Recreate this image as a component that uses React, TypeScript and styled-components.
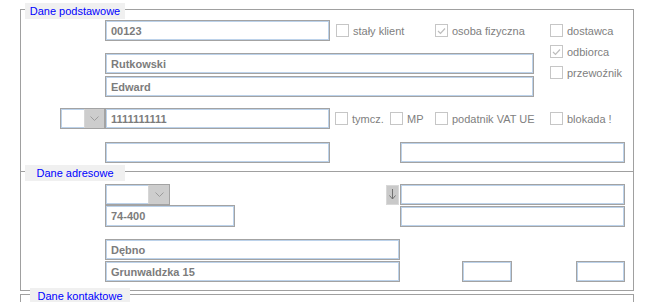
import { FC } from 'react';
import styled, { createGlobalStyle } from 'styled-components';

const GlobalStyle = createGlobalStyle`
  html, body {
    margin: 0;
    padding: 0;
    background: #ffffff;
  }

  body {
    width: 647px;
    height: 302px;
    overflow: hidden;
    font-family: 'Liberation Sans', Arial, sans-serif;
    font-size: 11px;
  }
`;

const Page = styled.div`
  width: 647px;
  padding: 9px 0 0 20px;
  box-sizing: border-box;
  display: flex;
  flex-direction: column;
`;

const GroupBox = styled.section<{ $gapTop?: number }>`
  position: relative;
  width: 614px;
  box-sizing: border-box;
  margin-top: ${p => p.$gapTop ?? 0}px;
  border: 1px solid #a0a0a0;
  display: flex;
  flex-direction: column;
`;

// caption lying over the top border of the group
const GroupTitle = styled.div<{ $left: number }>`
  position: absolute;
  top: -7px;
  left: ${p => p.$left}px;
  width: 100px;
  height: 16px;
  line-height: 16px;
  background: #f0f0f0;
  color: #0000ff;
  text-align: center;
  white-space: nowrap;
`;

const GroupBody = styled.div<{ $top: number; $bottom: number }>`
  display: flex;
  flex-direction: column;
  padding: ${p => p.$top}px 0 ${p => p.$bottom}px 0;
`;

const Row = styled.div<{ $left?: number; $top?: number }>`
  display: flex;
  align-items: center;
  margin-left: ${p => p.$left ?? 0}px;
  margin-top: ${p => p.$top ?? 0}px;
`;

const Block = styled.div<{ $left?: number; $top?: number }>`
  display: flex;
  align-items: flex-start;
  margin-left: ${p => p.$left ?? 0}px;
  margin-top: ${p => p.$top ?? 0}px;
`;

const Column = styled.div<{ $width?: number; $gap?: number }>`
  display: flex;
  flex-direction: column;
  gap: ${p => p.$gap ?? 0}px;
  width: ${p => (p.$width ? `${p.$width}px` : 'auto')};
`;

const Field = styled.div<{ $width: number; $height?: number; $left?: number }>`
  width: ${p => p.$width}px;
  height: ${p => p.$height ?? 21}px;
  margin-left: ${p => p.$left ?? 0}px;
  box-sizing: border-box;
  flex-shrink: 0;
  border: 1px solid #a3a3a3;
  box-shadow: inset 0 0 0 1px #bcd2ea;
  background: #ffffff;
  padding: 0 5px;
  display: flex;
  align-items: center;
  color: #7c7c7c;
  font-weight: bold;
  white-space: nowrap;
  overflow: hidden;
`;

const ComboBox = styled.div<{ $width: number; $buttonWidth: number }>`
  width: ${p => p.$width}px;
  height: 21px;
  box-sizing: border-box;
  flex-shrink: 0;
  border: 1px solid #a3a3a3;
  box-shadow: inset 0 0 0 1px #bcd2ea;
  background: #ffffff;
  display: flex;
  justify-content: flex-end;

  & > span {
    width: ${p => p.$buttonWidth}px;
    height: 19px;
    background: #cdcdcd;
    border-left: 1px solid #d6d6d6;
    box-sizing: border-box;
    display: flex;
    align-items: center;
    justify-content: center;
  }
`;

const ArrowButton = styled.div`
  width: 13px;
  height: 20px;
  margin-right: 1px;
  box-sizing: border-box;
  background: #c9c9c9;
  border: 1px solid #d8d8d8;
  display: flex;
  align-items: center;
  justify-content: center;
`;

const CheckItem = styled.div<{ $width?: number; $left?: number; $height?: number }>`
  display: flex;
  align-items: center;
  gap: 4px;
  width: ${p => (p.$width ? `${p.$width}px` : 'auto')};
  height: ${p => (p.$height ? `${p.$height}px` : 'auto')};
  margin-left: ${p => p.$left ?? 0}px;
  flex-shrink: 0;
  color: #808080;
  white-space: nowrap;
`;

const CheckBox = styled.span`
  width: 13px;
  height: 13px;
  box-sizing: border-box;
  border: 1px solid #c6c6c6;
  background: #ffffff;
  display: flex;
  align-items: center;
  justify-content: center;
`;

const Chevron: FC = () => (
  <svg width="9" height="5" viewBox="0 0 9 5">
    <polyline points="0.5,0.5 4.5,4.5 8.5,0.5" fill="none" stroke="#9c9c9c" strokeWidth="1" />
  </svg>
);

type ComboProps = { width: number; buttonWidth: number };

const Combo: FC<ComboProps> = ({ width, buttonWidth }) => (
  <ComboBox $width={width} $buttonWidth={buttonWidth}>
    <span><Chevron /></span>
  </ComboBox>
);

type CheckProps = { label: string; checked?: boolean; width?: number; left?: number; height?: number };

const Check: FC<CheckProps> = ({ label, checked, width, left, height }) => (
  <CheckItem $width={width} $left={left} $height={height}>
    <CheckBox>
      {checked && (
        <svg width="9" height="8" viewBox="0 0 9 8">
          <polyline points="1,4 3.5,6.5 8,1.5" fill="none" stroke="#bdbdbd" strokeWidth="1.2" />
        </svg>
      )}
    </CheckBox>
    {label}
  </CheckItem>
);

const App: FC = () => {
  return (
    <>
      <GlobalStyle />
      <Page>
        <GroupBox>
          <GroupTitle $left={4}>Dane podstawowe</GroupTitle>
          <GroupBody $top={10} $bottom={8}>
            <Block $left={84}>
              <Column $width={445}>
                <Row>
                  <Field $width={225}>00123</Field>
                  <Check label="stały klient" width={99} left={6} />
                  <Check label="osoba fizyczna" checked />
                </Row>
                <Column $gap={2} style={{ marginTop: 12 }}>
                  <Field $width={429}>Rutkowski</Field>
                  <Field $width={429}>Edward</Field>
                </Column>
              </Column>
              <Column>
                <Check label="dostawca" height={21} />
                <Check label="odbiorca" checked height={21} />
                <Check label="przewoźnik" height={21} />
              </Column>
            </Block>
            <Row $left={39} $top={11}>
              <Combo width={45} buttonWidth={20} />
              <Field $width={225}>1111111111</Field>
              <Check label="tymcz." width={55} left={5} />
              <Check label="MP" width={45} />
              <Check label="podatnik VAT UE" width={115} />
              <Check label="blokada !" />
            </Row>
            <Row $left={84} $top={13}>
              <Field $width={225} />
              <Field $width={225} $left={70} />
            </Row>
          </GroupBody>
        </GroupBox>

        <GroupBox $gapTop={-1}>
          <GroupTitle $left={4}>Dane adresowe</GroupTitle>
          <GroupBody $top={12} $bottom={8}>
            <Block $left={84}>
              <Column $width={281}>
                <Combo width={65} buttonWidth={21} />
                <Field $width={130} $height={22}>74-400</Field>
              </Column>
              <Column $gap={1}>
                <Row>
                  <ArrowButton>
                    <svg width="7" height="11" viewBox="0 0 7 11">
                      <line x1="3.5" y1="0" x2="3.5" y2="10" stroke="#707070" strokeWidth="1" />
                      <polyline points="0.5,6.5 3.5,10 6.5,6.5" fill="none" stroke="#707070" strokeWidth="1" />
                    </svg>
                  </ArrowButton>
                  <Field $width={225} />
                </Row>
                <Field $width={225} $left={14} />
              </Column>
            </Block>
            <Column $gap={1} style={{ marginLeft: 84, marginTop: 12 }}>
              <Field $width={295}>Dębno</Field>
              <Row>
                <Field $width={295}>Grunwaldzka 15</Field>
                <Field $width={50} $left={62} />
                <Field $width={49} $left={64} />
              </Row>
            </Column>
          </GroupBody>
        </GroupBox>

        <GroupBox $gapTop={3}>
          <GroupTitle $left={9}>Dane kontaktowe</GroupTitle>
          <GroupBody $top={12} $bottom={8}>
            <Row $left={84}>
              <Field $width={225} />
            </Row>
          </GroupBody>
        </GroupBox>
      </Page>
    </>
  );
};

export default App;
